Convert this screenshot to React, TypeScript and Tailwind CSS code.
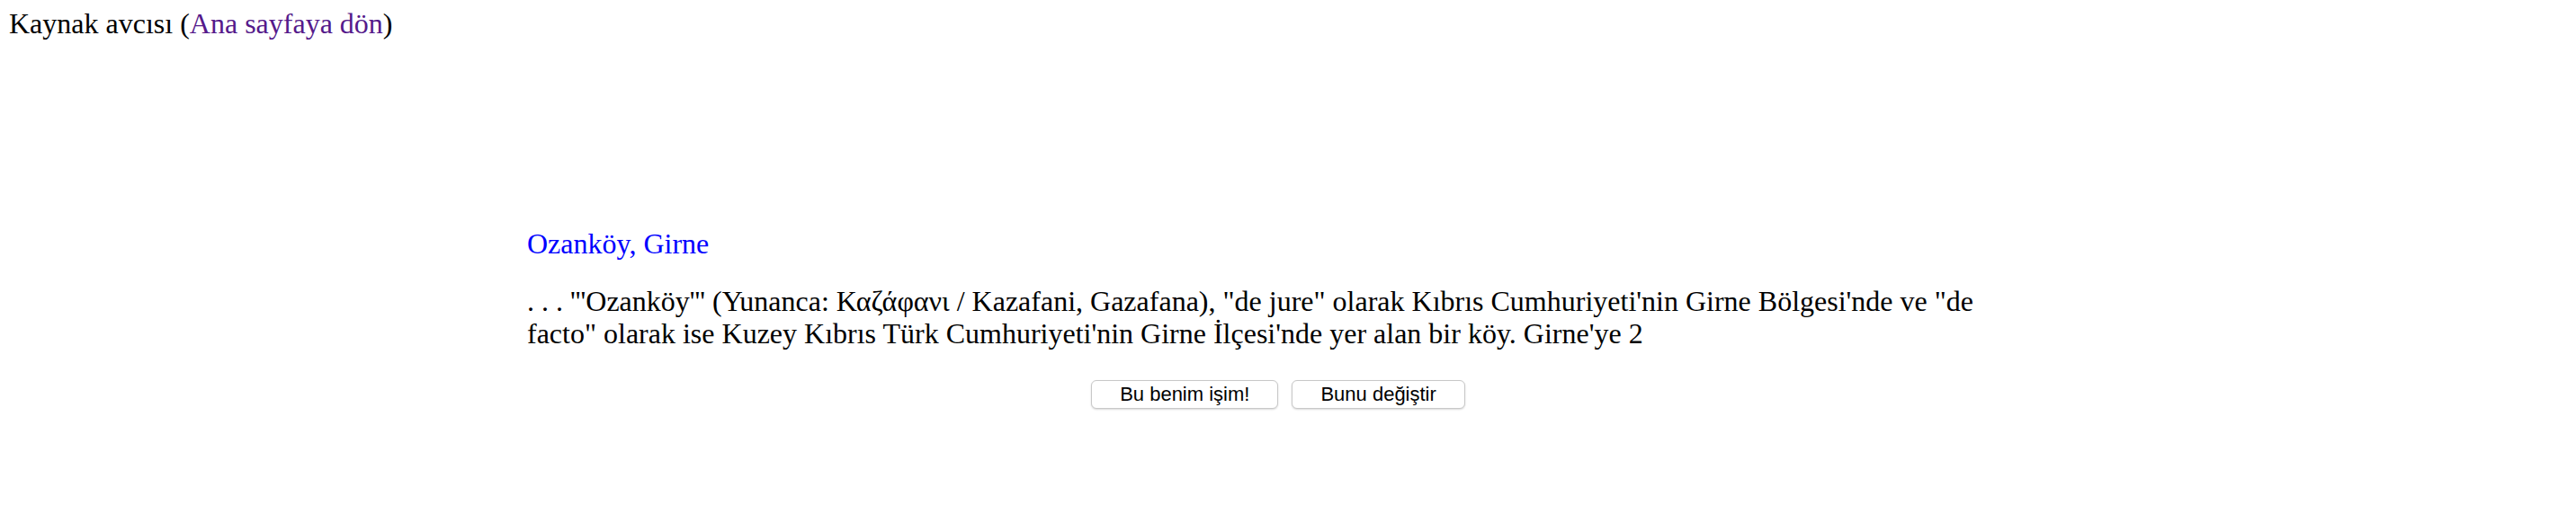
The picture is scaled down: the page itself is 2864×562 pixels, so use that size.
import React from "react";

export default function App() {
  return (
    <div className="min-h-[562px] bg-white font-['Liberation_Serif','Times_New_Roman',serif] text-[32px] leading-[1.15] text-black">
      <div className="pl-[10px] pt-[8px]">
        Kaynak avcısı (<a href="#" className="text-[#551a8b]">Ana sayfaya dön</a>)
      </div>
      <div className="ml-[586px] mt-[208px] w-[1674px]">
        <a href="#" className="text-[#0000ff]">
          Ozanköy, Girne
        </a>
        <p className="mt-[27px]">
          . . . '''Ozanköy''' (Yunanca: Καζάφανι / Kazafani, Gazafana), "de jure" olarak Kıbrıs Cumhuriyeti'nin Girne Bölgesi'nde ve "de facto" olarak ise Kuzey Kıbrıs Türk Cumhuriyeti'nin Girne İlçesi'nde yer alan bir köy. Girne'ye 2
        </p>
        <div className="mt-[33px] flex justify-center gap-[15px] pr-[4px] font-['Liberation_Sans',Arial,sans-serif] text-[22px] leading-none">
          <button className="h-[32px] rounded-[6px] border border-[#c8c8c8] bg-white px-[31px] shadow-[0_1px_2px_rgba(0,0,0,0.15)]">
            Bu benim işim!
          </button>
          <button className="h-[32px] rounded-[6px] border border-[#c8c8c8] bg-white px-[31px] shadow-[0_1px_2px_rgba(0,0,0,0.15)]">
            Bunu değiştir
          </button>
        </div>
      </div>
    </div>
  );
}
